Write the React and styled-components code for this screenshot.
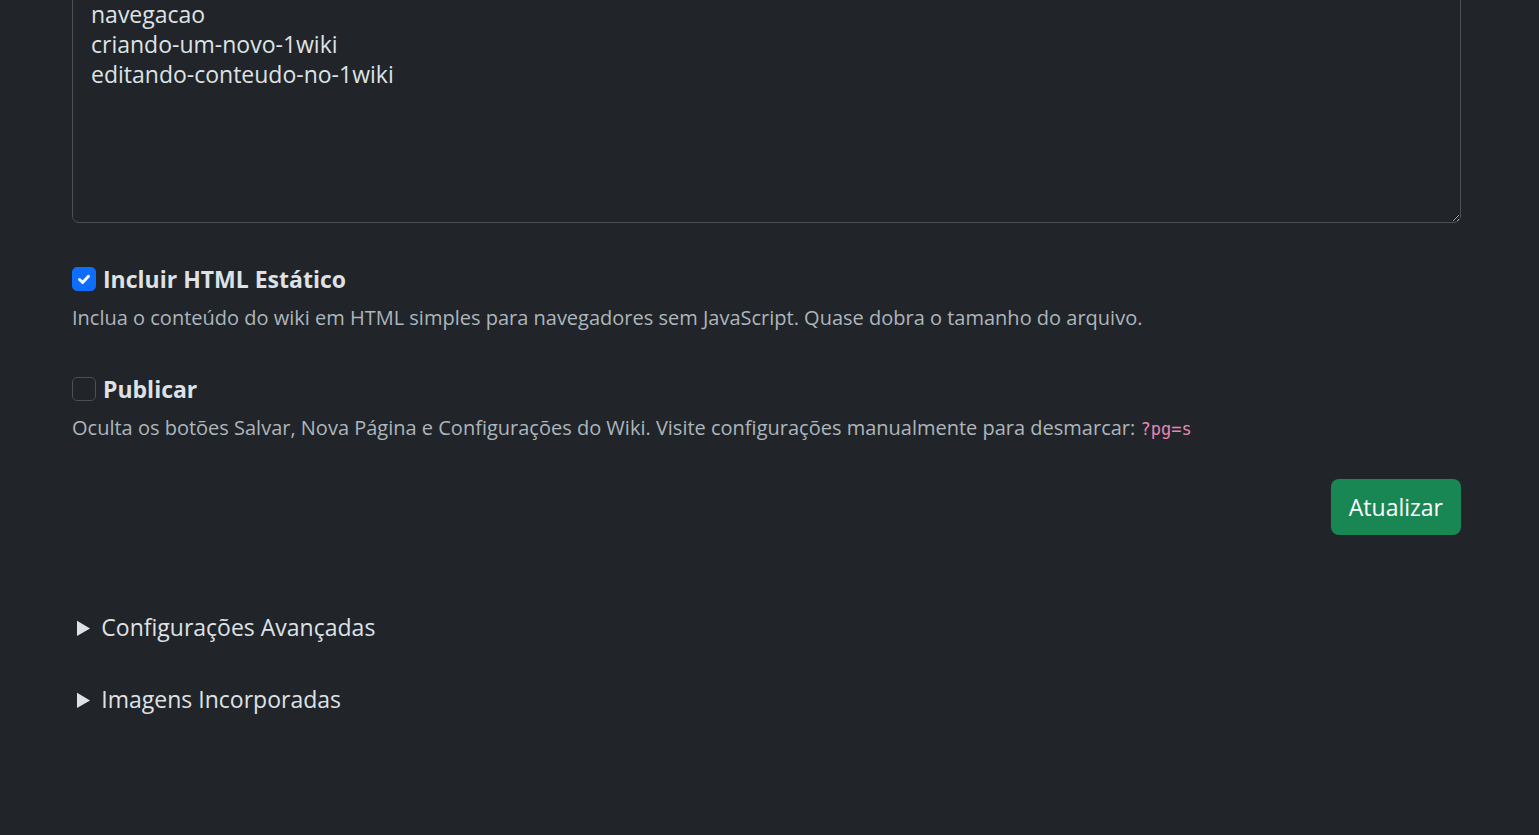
import React from "react";
import styled, { createGlobalStyle } from "styled-components";

const GlobalStyle = createGlobalStyle`
  html, body {
    margin: 0;
    background: #212529;
    color: #dee2e6;
    font-family: "Open Sans", "Noto Sans", sans-serif;
    font-size: 20px;
    line-height: 1.5;
  }
`;

const Page = styled.div`
  width: 1389px;
  margin: -10px 0 0 72px;
  padding-bottom: 60px;
`;

const Editor = styled.textarea`
  display: block;
  box-sizing: border-box;
  width: 100%;
  height: 233px;
  padding: 8px 18px 7px;
  background: #212529;
  color: #dee2e6;
  border: 1px solid #495057;
  border-radius: 7px;
  font: inherit;
  font-size: 23px;
  line-height: 30px;
  resize: vertical;
  outline: none;
`;

const Option = styled.div`
  margin-top: ${(p) => p.$top}px;
`;

const CheckRow = styled.label`
  display: flex;
  align-items: center;
  gap: 7px;
  font-weight: 700;
  font-size: 23px;
  line-height: 34px;
  color: #dee2e6;
`;

const Box = styled.span`
  width: 24px;
  height: 24px;
  box-sizing: border-box;
  border-radius: 5px;
  display: inline-flex;
  align-items: center;
  justify-content: center;
  background: ${(p) => (p.$checked ? "#0d6efd" : "#212529")};
  border: 1px solid ${(p) => (p.$checked ? "#0d6efd" : "#495057")};
`;

const Help = styled.div`
  margin-top: 7px;
  color: #adb5bd;
  font-size: 20px;
`;

const Code = styled.code`
  font-family: "DejaVu Sans Mono", "Liberation Mono", monospace;
  font-size: 17px;
  color: #e685b5;
`;

const Actions = styled.div`
  display: flex;
  justify-content: flex-end;
  margin-top: 36px;
`;

const Button = styled.button`
  background: #198754;
  color: #fff;
  border: none;
  border-radius: 8px;
  font: inherit;
  font-size: 23px;
  height: 56px;
  padding: 0 18px;
`;

const Details = styled.details`
  margin-top: ${(p) => p.$top}px;
  padding-left: 5px;
  font-size: 23px;
  line-height: 34px;
  color: #dee2e6;

  summary {
    cursor: pointer;
  }
`;

const Check = () => (
  <svg width="18" height="18" viewBox="0 0 20 20">
    <path
      d="M5 10.5l3.5 3.5l6.5-7"
      fill="none"
      stroke="#fff"
      strokeWidth="3.2"
      strokeLinecap="round"
      strokeLinejoin="round"
    />
  </svg>
);

export default function App() {
  return (
    <>
      <GlobalStyle />
      <Page>
        <Editor
          defaultValue={"navegacao\ncriando-um-novo-1wiki\neditando-conteudo-no-1wiki"}
          spellCheck={false}
        />
        <Option $top={39}>
          <CheckRow>
            <Box $checked>
              <Check />
            </Box>
            Incluir HTML Estático
          </CheckRow>
          <Help>
            Inclua o conteúdo do wiki em HTML simples para navegadores sem JavaScript. Quase dobra o tamanho do arquivo.
          </Help>
        </Option>
        <Option $top={39}>
          <CheckRow>
            <Box />
            Publicar
          </CheckRow>
          <Help>
            Oculta os botões Salvar, Nova Página e Configurações do Wiki. Visite configurações manualmente para desmarcar:{" "}
            <Code>?pg=s</Code>
          </Help>
        </Option>
        <Actions>
          <Button>Atualizar</Button>
        </Actions>
        <Details $top={75}>
          <summary>Configurações Avançadas</summary>
        </Details>
        <Details $top={38}>
          <summary>Imagens Incorporadas</summary>
        </Details>
      </Page>
    </>
  );
}
